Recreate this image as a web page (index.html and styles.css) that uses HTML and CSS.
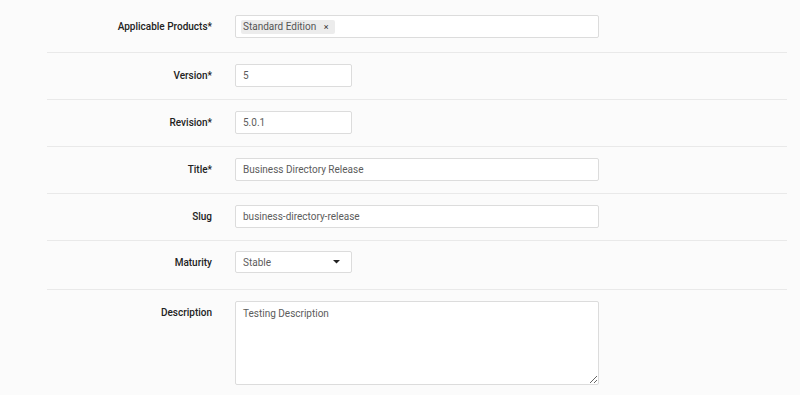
FILE: index.html
```html
<!DOCTYPE html>
<html lang="en">
<head>
    <meta charset="UTF-8">
    <meta name="viewport" content="width=device-width, initial-scale=1.0">
    <title>Edit Release</title>
    <link rel="stylesheet" href="styles.css">
</head>
<body>
    <form class="release-form">
        <div class="form-row form-row-first">
            <label class="form-label">Applicable Products*</label>
            <div class="form-field">
                <div class="tag-input wide">
                    <span class="tag">Standard Edition <span class="tag-remove">&times;</span></span>
                </div>
            </div>
        </div>

        <div class="form-row">
            <label class="form-label" for="version">Version*</label>
            <div class="form-field">
                <input id="version" class="text-input short" type="text" value="5">
            </div>
        </div>

        <div class="form-row">
            <label class="form-label" for="revision">Revision*</label>
            <div class="form-field">
                <input id="revision" class="text-input short" type="text" value="5.0.1">
            </div>
        </div>

        <div class="form-row">
            <label class="form-label" for="title">Title*</label>
            <div class="form-field">
                <input id="title" class="text-input wide" type="text" value="Business Directory Release">
            </div>
        </div>

        <div class="form-row">
            <label class="form-label" for="slug">Slug</label>
            <div class="form-field">
                <input id="slug" class="text-input wide" type="text" value="business-directory-release">
            </div>
        </div>

        <div class="form-row form-row-select">
            <label class="form-label" for="maturity">Maturity</label>
            <div class="form-field">
                <div class="select-wrap short">
                    <select id="maturity" class="select-input">
                        <option>Stable</option>
                        <option>Beta</option>
                        <option>Alpha</option>
                    </select>
                    <svg class="select-caret" width="7" height="4" viewBox="0 0 7 4"><path d="M0 0h7L3.5 3.5z" fill="#222"/></svg>
                </div>
            </div>
        </div>

        <div class="form-row form-row-top">
            <label class="form-label" for="description">Description</label>
            <div class="form-field">
                <textarea id="description" class="text-area wide">Testing Description</textarea>
            </div>
        </div>
    </form>
</body>
</html>
```

FILE: styles.css
```css
/* Base */
* {
    margin: 0;
    padding: 0;
    box-sizing: border-box;
}

body {
    font-family: 'Roboto', 'Liberation Sans', sans-serif;
    font-size: 10px;
    background: #fbfbfb;
    color: #5c5c5c;
}

.release-form {
    width: 740px;
    margin-left: 47px;
}

/* Rows */
.form-row {
    display: flex;
    align-items: center;
    gap: 23px;
    padding: 11px 0 12px;
    border-bottom: 1px solid #e9e9e9;
}

.form-row-first {
    padding: 15px 0 14px;
}

.form-row-select {
    padding: 10px 0 16px;
}

.form-row-top {
    align-items: flex-start;
    border-bottom: none;
}

.form-row-top .form-label {
    padding-top: 6px;
}

.form-label {
    width: 165px;
    flex-shrink: 0;
    text-align: right;
    font-weight: 500;
    color: #222;
}

/* Fields */
.wide {
    width: 364px;
}

.short {
    width: 117px;
}

.text-input,
.text-area,
.tag-input,
.select-input {
    display: block;
    font-family: inherit;
    font-size: 10px;
    color: #5c5c5c;
    background: #fff;
    border: 1px solid #dcdcdc;
    border-radius: 2px;
    outline: none;
}

.text-input {
    height: 23px;
    padding: 0 7px;
}

.tag-input {
    height: 23px;
    padding: 0 5px;
    display: flex;
    align-items: center;
}

.tag {
    background: #ececec;
    border-radius: 2px;
    padding: 2px 6px 2px 2px;
    color: #555;
    line-height: 10px;
}

.tag-remove {
    margin-left: 5px;
    font-size: 9px;
    color: #333;
}

.select-wrap {
    position: relative;
}

.select-input {
    width: 100%;
    height: 22px;
    padding: 0 7px;
    appearance: none;
    -webkit-appearance: none;
}

.select-caret {
    position: absolute;
    right: 12px;
    top: 9px;
}

.text-area {
    height: 84px;
    padding: 6px 7px;
    resize: both;
    line-height: 12px;
}
```
